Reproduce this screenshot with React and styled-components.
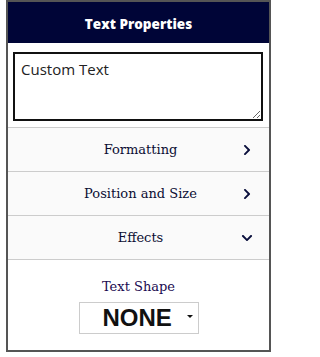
import styled, { createGlobalStyle } from "styled-components";
import { FaChevronRight, FaChevronDown } from "react-icons/fa";

const GlobalStyle = createGlobalStyle`
  body {
    margin: 0;
    background: #ffffff;
  }
`;

const sections = [
  { title: "Formatting", open: false },
  { title: "Position and Size", open: false },
  { title: "Effects", open: true },
];

export default function App() {
  return (
    <>
      <GlobalStyle />
      <Page>
        <Panel>
          <Header>Text Properties</Header>

          <TextBlock>
            <TextInput defaultValue="Custom Text" />
          </TextBlock>

          {sections.map((item) => (
            <Row key={item.title}>
              <RowTitle>{item.title}</RowTitle>
              <Chevron>
                {item.open ? <FaChevronDown /> : <FaChevronRight />}
              </Chevron>
            </Row>
          ))}

          <ShapeBlock>
            <ShapeLabel>Text Shape</ShapeLabel>
            <SelectBox>
              <span>NONE</span>
              <Caret />
            </SelectBox>
          </ShapeBlock>
        </Panel>
      </Page>
    </>
  );
}

const Page = styled.div`
  padding: 0 5px 0 6px;
`;

const Panel = styled.div`
  width: 265px;
  height: 352px;
  box-sizing: border-box;
  border: 2px solid #555555;
  display: flex;
  flex-direction: column;
`;

const Header = styled.div`
  height: 41px;
  background: #000537;
  color: #ffffff;
  font-family: "Open Sans", "Liberation Sans", sans-serif;
  font-weight: 800;
  font-size: 13.5px;
  display: flex;
  align-items: center;
  justify-content: center;
  padding-top: 3px;
  box-sizing: border-box;
`;

const TextBlock = styled.div`
  padding: 9px 6px 6px 5px;
  border-bottom: 1px solid #cccccc;
`;

const TextInput = styled.textarea`
  display: block;
  width: 100%;
  height: 69px;
  box-sizing: border-box;
  border: 2px solid #111111;
  padding: 5px 6px;
  font-family: "Open Sans", sans-serif;
  font-size: 15px;
  color: #222222;
  outline: none;
  resize: vertical;
`;

const Row = styled.div`
  height: 44px;
  box-sizing: border-box;
  border-bottom: 1px solid #cccccc;
  background: #fafafa;
  display: flex;
  align-items: center;
  position: relative;
  padding-left: 4px;
`;

const RowTitle = styled.div`
  flex: 1;
  text-align: center;
  font-family: "DejaVu Serif", serif;
  font-size: 13px;
  color: #0b0d33;
`;

const Chevron = styled.div`
  position: absolute;
  right: 16px;
  top: 0;
  bottom: 0;
  display: flex;
  align-items: center;
  color: #0a0f3c;
  font-size: 12px;
`;

const ShapeBlock = styled.div`
  flex: 1;
  display: flex;
  flex-direction: column;
  align-items: center;
  padding-top: 19px;
`;

const ShapeLabel = styled.div`
  font-family: "DejaVu Serif", serif;
  font-size: 13px;
  color: #1a0a50;
  margin-bottom: 8px;
`;

const SelectBox = styled.div`
  width: 120px;
  height: 32px;
  box-sizing: border-box;
  border: 1px solid #cccccc;
  background: #ffffff;
  display: flex;
  align-items: flex-end;
  padding: 0 5px 0 23px;
  font-family: "Liberation Sans", Arial, sans-serif;
  font-weight: 700;
  font-size: 24px;
  line-height: 30px;
  color: #111111;

  span {
    flex: 1;
  }
`;

const Caret = styled.i`
  align-self: flex-start;
  margin-top: 12px;
  width: 0;
  height: 0;
  border-left: 3px solid transparent;
  border-right: 3px solid transparent;
  border-top: 3px solid #111111;
`;
